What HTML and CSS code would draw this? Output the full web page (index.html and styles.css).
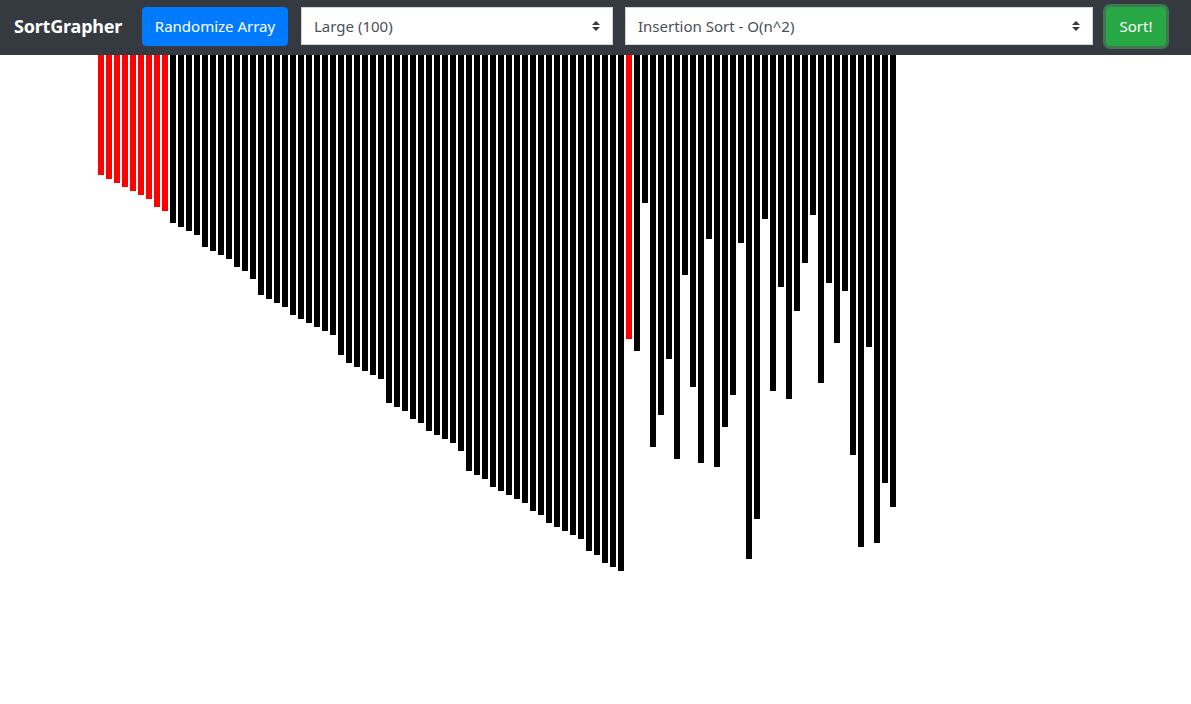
FILE: index.html
```html
<!DOCTYPE html>
<html lang="en">
<head>
<meta charset="utf-8">
<title>SortGrapher</title>
<link rel="stylesheet" href="styles.css">
</head>
<body>
<nav class="navbar">
  <a class="brand" href="#">SortGrapher</a>
  <button class="btn btn-primary" type="button">Randomize Array</button>
  <div class="select-wrap size-select">
    <select class="form-select">
      <option>Large (100)</option>
    </select>
    <svg class="caret" width="8" height="10" viewBox="0 0 8 10"><path d="M4 0 L8 4 L0 4 Z M0 6 L8 6 L4 10 Z" fill="#343a40"/></svg>
  </div>
  <div class="select-wrap algo-select">
    <select class="form-select">
      <option>Insertion Sort - O(n^2)</option>
    </select>
    <svg class="caret" width="8" height="10" viewBox="0 0 8 10"><path d="M4 0 L8 4 L0 4 Z M0 6 L8 6 L4 10 Z" fill="#343a40"/></svg>
  </div>
  <button class="btn btn-success focused" type="button">Sort!</button>
</nav>
<main class="chart">
<div class="bar red" style="height:120px"></div>
<div class="bar red" style="height:124px"></div>
<div class="bar red" style="height:128px"></div>
<div class="bar red" style="height:132px"></div>
<div class="bar red" style="height:136px"></div>
<div class="bar red" style="height:140px"></div>
<div class="bar red" style="height:144px"></div>
<div class="bar red" style="height:152px"></div>
<div class="bar red" style="height:156px"></div>
<div class="bar" style="height:168px"></div>
<div class="bar" style="height:172px"></div>
<div class="bar" style="height:176px"></div>
<div class="bar" style="height:180px"></div>
<div class="bar" style="height:192px"></div>
<div class="bar" style="height:196px"></div>
<div class="bar" style="height:200px"></div>
<div class="bar" style="height:204px"></div>
<div class="bar" style="height:212px"></div>
<div class="bar" style="height:216px"></div>
<div class="bar" style="height:224px"></div>
<div class="bar" style="height:240px"></div>
<div class="bar" style="height:244px"></div>
<div class="bar" style="height:248px"></div>
<div class="bar" style="height:252px"></div>
<div class="bar" style="height:260px"></div>
<div class="bar" style="height:264px"></div>
<div class="bar" style="height:268px"></div>
<div class="bar" style="height:272px"></div>
<div class="bar" style="height:276px"></div>
<div class="bar" style="height:280px"></div>
<div class="bar" style="height:300px"></div>
<div class="bar" style="height:308px"></div>
<div class="bar" style="height:312px"></div>
<div class="bar" style="height:316px"></div>
<div class="bar" style="height:320px"></div>
<div class="bar" style="height:324px"></div>
<div class="bar" style="height:348px"></div>
<div class="bar" style="height:352px"></div>
<div class="bar" style="height:356px"></div>
<div class="bar" style="height:364px"></div>
<div class="bar" style="height:368px"></div>
<div class="bar" style="height:376px"></div>
<div class="bar" style="height:380px"></div>
<div class="bar" style="height:384px"></div>
<div class="bar" style="height:388px"></div>
<div class="bar" style="height:396px"></div>
<div class="bar" style="height:416px"></div>
<div class="bar" style="height:420px"></div>
<div class="bar" style="height:424px"></div>
<div class="bar" style="height:432px"></div>
<div class="bar" style="height:436px"></div>
<div class="bar" style="height:440px"></div>
<div class="bar" style="height:444px"></div>
<div class="bar" style="height:448px"></div>
<div class="bar" style="height:456px"></div>
<div class="bar" style="height:460px"></div>
<div class="bar" style="height:468px"></div>
<div class="bar" style="height:472px"></div>
<div class="bar" style="height:476px"></div>
<div class="bar" style="height:480px"></div>
<div class="bar" style="height:484px"></div>
<div class="bar" style="height:496px"></div>
<div class="bar" style="height:500px"></div>
<div class="bar" style="height:508px"></div>
<div class="bar" style="height:512px"></div>
<div class="bar" style="height:516px"></div>
<div class="bar red" style="height:284px"></div>
<div class="bar" style="height:296px"></div>
<div class="bar" style="height:148px"></div>
<div class="bar" style="height:392px"></div>
<div class="bar" style="height:360px"></div>
<div class="bar" style="height:304px"></div>
<div class="bar" style="height:404px"></div>
<div class="bar" style="height:220px"></div>
<div class="bar" style="height:332px"></div>
<div class="bar" style="height:408px"></div>
<div class="bar" style="height:184px"></div>
<div class="bar" style="height:412px"></div>
<div class="bar" style="height:372px"></div>
<div class="bar" style="height:340px"></div>
<div class="bar" style="height:188px"></div>
<div class="bar" style="height:504px"></div>
<div class="bar" style="height:464px"></div>
<div class="bar" style="height:164px"></div>
<div class="bar" style="height:336px"></div>
<div class="bar" style="height:232px"></div>
<div class="bar" style="height:344px"></div>
<div class="bar" style="height:256px"></div>
<div class="bar" style="height:208px"></div>
<div class="bar" style="height:160px"></div>
<div class="bar" style="height:328px"></div>
<div class="bar" style="height:228px"></div>
<div class="bar" style="height:288px"></div>
<div class="bar" style="height:236px"></div>
<div class="bar" style="height:400px"></div>
<div class="bar" style="height:492px"></div>
<div class="bar" style="height:292px"></div>
<div class="bar" style="height:488px"></div>
<div class="bar" style="height:428px"></div>
<div class="bar" style="height:452px"></div>
</main>
</body>
</html>
```
FILE: styles.css
```css
* { box-sizing: border-box; }
html, body { margin: 0; padding: 0; background: #fff; }
body {
  font-family: "Noto Sans", "Open Sans", sans-serif;
  font-size: 16px;
  color: #212529;
}
.navbar {
  display: flex;
  align-items: flex-start;
  height: 55px;
  padding: 7px 14px 0;
  background: #343a40;
}
.brand {
  color: #fff;
  font-weight: 700;
  font-size: 18px;
  line-height: 38px;
  letter-spacing: -0.2px;
  text-decoration: none;
  margin-right: 16px;
  width: 112px;
  white-space: nowrap;
}
.btn {
  height: 39px;
  padding: 0 4px;
  border: 1px solid transparent;
  border-radius: 4px;
  font-family: inherit;
  font-size: 15px;
  color: #fff;
  line-height: 1;
  white-space: nowrap;
  cursor: pointer;
}
.btn-primary { background: #007bff; border-color: #007bff; width: 146px; }
.btn-success {
  background: #28a745;
  border-color: #28a745;
  width: 60px;
  margin-left: 13px;
}
.btn-success.focused { box-shadow: 0 0 0 3px rgba(72, 180, 97, 0.5); }
.select-wrap { position: relative; height: 38px; }
.size-select { width: 312px; margin-left: 13px; }
.algo-select { width: 468px; margin-left: 12px; }
.form-select {
  width: 100%;
  height: 100%;
  appearance: none;
  -webkit-appearance: none;
  background: #fff;
  border: 1px solid #ced4da;
  border-radius: 0;
  padding: 0 12px;
  font-family: inherit;
  font-size: 15px;
  color: #495057;
}
.caret { position: absolute; right: 13px; top: 14px; pointer-events: none; }
.chart {
  display: flex;
  align-items: flex-start;
  padding-left: 98px;
}
.bar {
  flex: none;
  width: 6px;
  margin-right: 2px;
  background: #000;
}
.bar.red { background: #f00; }
```
